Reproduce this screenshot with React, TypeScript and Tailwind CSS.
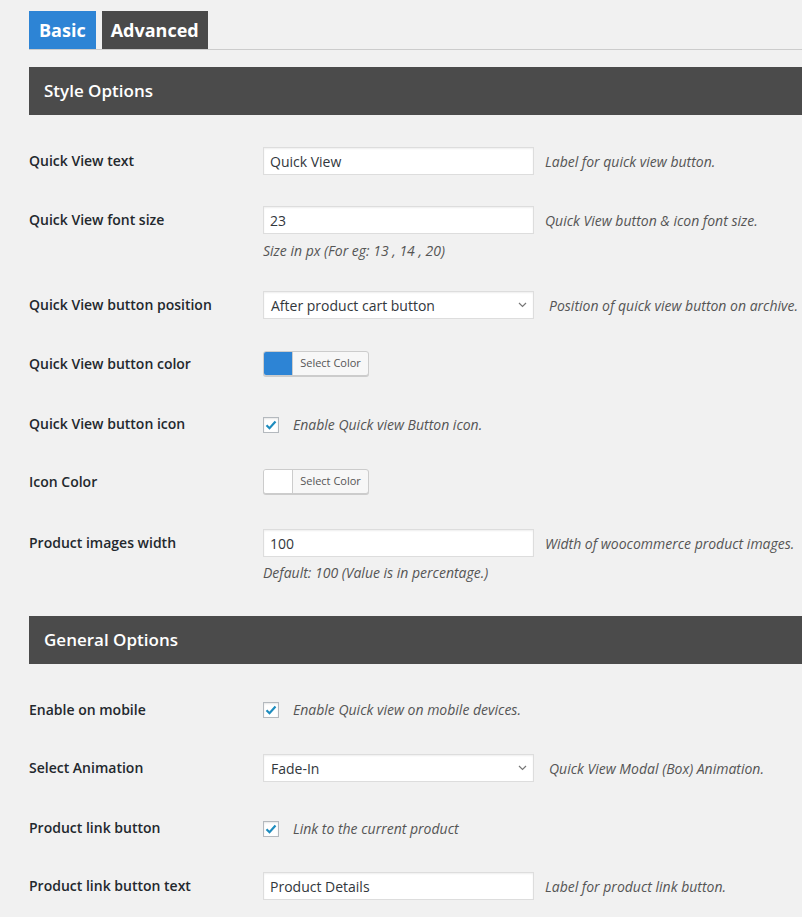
import React from "react";

const font = { fontFamily: '"Open Sans", "Noto Sans", Arial, sans-serif' };

function TextInput({ value }: { value: string }) {
  return (
    <div className="flex h-[28px] w-[271px] items-center border border-[#dddddd] bg-white px-[6px] text-[14px] text-[#32373c] shadow-[inset_0_1px_2px_rgba(0,0,0,0.07)]">
      {value}
    </div>
  );
}

function SelectBox({ value }: { value: string }) {
  return (
    <div className="flex h-[28px] w-[271px] items-center justify-between border border-[#dddddd] bg-white pl-[7px] pr-[6px] text-[14px] text-[#32373c] shadow-[inset_0_1px_2px_rgba(0,0,0,0.07)]">
      <span>{value}</span>
      <svg width="9" height="6" viewBox="0 0 9 6" fill="none">
        <path d="M1 1l3.5 3.5L8 1" stroke="#777" strokeWidth="1.2" />
      </svg>
    </div>
  );
}

function ColorPicker({ color }: { color: string }) {
  return (
    <div className="flex h-[25px] w-[106px] overflow-hidden rounded-[3px] border border-[#cccccc] bg-[#f7f7f7] shadow-[0_1px_0_#cccccc]">
      <div className={`w-[29px] border-r border-[#cccccc] ${color}`} />
      <div className="flex flex-1 items-center justify-center text-[11px] text-[#555555]">
        Select Color
      </div>
    </div>
  );
}

function Checkbox({ label }: { label: string }) {
  return (
    <div className="flex items-center">
      <div className="flex h-[16px] w-[16px] items-center justify-center border border-[#b4b9be] bg-white shadow-[inset_0_1px_2px_rgba(0,0,0,0.1)]">
        <svg width="12" height="10" viewBox="0 0 12 10">
          <path d="M1.5 5.2l3 3L10.5 1.5" stroke="#1e8cbe" strokeWidth="2.2" fill="none" />
        </svg>
      </div>
      <span className="ml-[14px] text-[14px] italic text-[#555555]">{label}</span>
    </div>
  );
}

function Desc({ children, ml = "ml-[11px]" }: { children: React.ReactNode; ml?: string }) {
  return <span className={`${ml} whitespace-nowrap text-[14px] italic text-[#555555]`}>{children}</span>;
}

function Row({
  label,
  height,
  pad = "pt-[15px]",
  children,
}: {
  label: string;
  height: string;
  pad?: string;
  children: React.ReactNode;
}) {
  return (
    <div className={`flex ${height}`}>
      <div className="w-[234px] shrink-0 pt-[19px] text-[14px] font-semibold leading-[20px] text-[#23282d]">
        {label}
      </div>
      <div className={pad}>{children}</div>
    </div>
  );
}

function SectionHeader({ title }: { title: string }) {
  return (
    <div className="flex h-[48px] items-center bg-[#4b4b4b] pl-[15px] text-[17px] font-semibold text-white">
      {title}
    </div>
  );
}

export default function App() {
  return (
    <div className="min-h-screen overflow-hidden bg-[#f1f1f1] pl-[29px] pt-[11px]" style={font}>
      {/* Tabs */}
      <div className="flex gap-[6px] border-b border-[#cccccc]">
        <div className="flex h-[38px] items-center bg-[#2d84d5] px-[10px] text-[18px] font-bold text-white">
          Basic
        </div>
        <div className="flex h-[38px] items-center bg-[#4a4a4a] px-[9px] text-[18px] font-bold text-white">
          Advanced
        </div>
      </div>

      <div className="mt-[17px]">
        <SectionHeader title="Style Options" />
        <div className="pt-[17px]">
          <Row label="Quick View text" height="h-[59px]">
            <div className="flex items-center">
              <TextInput value="Quick View" />
              <Desc>Label for quick view button.</Desc>
            </div>
          </Row>
          <Row label="Quick View font size" height="h-[85px]">
            <div className="flex items-center">
              <TextInput value="23" />
              <Desc>Quick View button &amp; icon font size.</Desc>
            </div>
            <p className="mt-[6px] text-[14px] italic text-[#555555]">Size in px (For eg: 13 , 14 , 20)</p>
          </Row>
          <Row label="Quick View button position" height="h-[59px]">
            <div className="flex items-center">
              <SelectBox value="After product cart button" />
              <Desc ml="ml-[15px]">Position of quick view button on archive.</Desc>
            </div>
          </Row>
          <Row label="Quick View button color" height="h-[60px]" pad="pt-[16px]">
            <ColorPicker color="bg-[#2d84d5]" />
          </Row>
          <Row label="Quick View button icon" height="h-[58px]" pad="pt-[19px]">
            <Checkbox label="Enable Quick view Button icon." />
          </Row>
          <Row label="Icon Color" height="h-[61px]" pad="pt-[16px]">
            <ColorPicker color="bg-white" />
          </Row>
          <Row label="Product images width" height="h-[102px]">
            <div className="flex items-center">
              <TextInput value="100" />
              <Desc>Width of woocommerce product images.</Desc>
            </div>
            <p className="mt-[5px] text-[14px] italic text-[#555555]">Default: 100 (Value is in percentage.)</p>
          </Row>
        </div>

        <SectionHeader title="General Options" />
        <div className="pt-[17px]">
          <Row label="Enable on mobile" height="h-[58px]" pad="pt-[18px]">
            <Checkbox label="Enable Quick view on mobile devices." />
          </Row>
          <Row label="Select Animation" height="h-[60px]" pad="pt-[15px]">
            <div className="flex items-center">
              <SelectBox value="Fade-In" />
              <Desc ml="ml-[15px]">Quick View Modal (Box) Animation.</Desc>
            </div>
          </Row>
          <Row label="Product link button" height="h-[58px]" pad="pt-[19px]">
            <Checkbox label="Link to the current product" />
          </Row>
          <Row label="Product link button text" height="h-[59px]" pad="pt-[15px]">
            <div className="flex items-center">
              <TextInput value="Product Details" />
              <Desc>Label for product link button.</Desc>
            </div>
          </Row>
        </div>
      </div>
    </div>
  );
}
